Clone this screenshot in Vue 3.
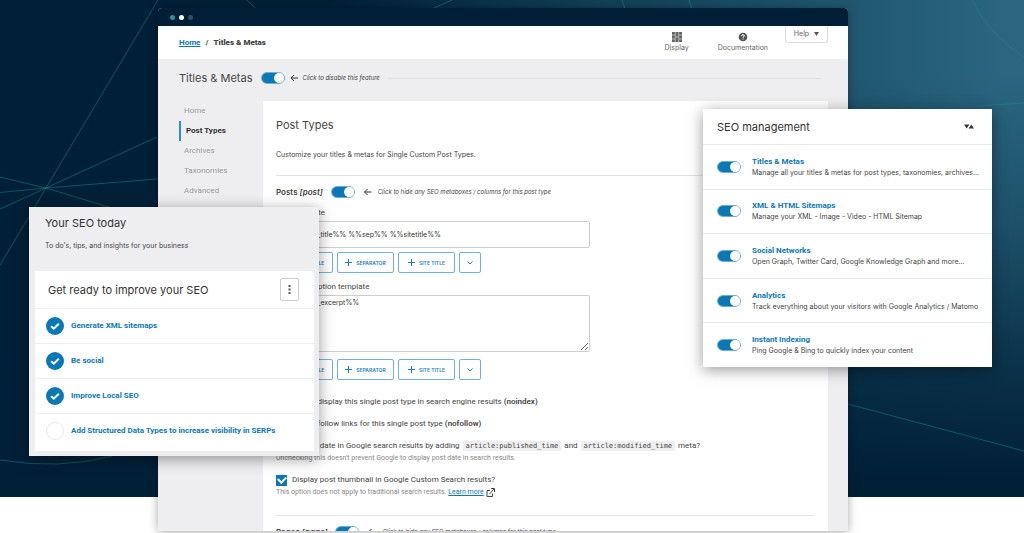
<script setup>
import { ref } from 'vue'

const nav = ['Home', 'Post Types', 'Archives', 'Taxonomies', 'Advanced']
const current = 'Post Types'

const pageEnabled = ref(true)
const postsEnabled = ref(true)
const pagesEnabled = ref(true)
const titleTemplate = ref('%%post_title%% %%sep%% %%sitetitle%%')
const descTemplate = ref('%%post_excerpt%%')
const noindex = ref(false)
const nofollow = ref(false)
const showDate = ref(true)
const showThumb = ref(true)

const tags = ['Post title', 'Separator', 'Site title']

const tasks = ref([
  { label: 'Generate XML sitemaps', done: true },
  { label: 'Be social', done: true },
  { label: 'Improve Local SEO', done: true },
  { label: 'Add Structured Data Types to increase visibility in SERPs', done: false },
])

const features = ref([
  { name: 'Titles & Metas', text: 'Manage all your titles & metas for post types, taxonomies, archives...', on: true },
  { name: 'XML & HTML Sitemaps', text: 'Manage your XML - Image - Video - HTML Sitemap', on: true },
  { name: 'Social Networks', text: 'Open Graph, Twitter Card, Google Knowledge Graph and more...', on: true },
  { name: 'Analytics', text: 'Track everything about your visitors with Google Analytics / Matomo', on: true },
  { name: 'Instant Indexing', text: 'Ping Google & Bing to quickly index your content', on: true },
])
</script>

<template>
  <div class="stage">
    <div class="backdrop">
      <svg viewBox="0 0 1024 497" preserveAspectRatio="xMidYMid slice" aria-hidden="true">
        <g fill="none" stroke="#1c8a88" stroke-opacity=".5">
          <path d="M158 0 46 188 0 265M157 137 46 188 0 209M157 179 46 188 0 192.500M0 177 46 188 112 208" />
          <path d="M0 460Q60 470 112 456" />
          <path d="M247 0l8 8M434 8l18-8M622 0l3 9M689 0l3 9" />
          <path d="M972 0Q988 34 1024 57M976 106l48-3M848 404l176 47" />
        </g>
      </svg>
    </div>

    <main class="window">
      <div class="titlebar"><i class="dot teal"></i><i class="dot white"></i><i class="dot dim"></i></div>

      <header class="topbar">
        <nav class="crumbs" aria-label="Breadcrumb">
          <a href="#">Home</a><span>/</span><b>Titles &amp; Metas</b>
        </nav>
        <div class="tools">
          <button class="tool display" type="button">
            <svg width="10" height="10" viewBox="0 0 10 10"><path d="M0 0h10v10H0z" fill="#666" /><path d="M3.300 0v10M6.700 0v10M0 3h3M0 7h3M3.500 5h3M7 3h3M7 7h3" stroke="#fff" stroke-width=".5" /></svg>
            Display
          </button>
          <button class="tool docs" type="button">
            <svg width="10" height="10" viewBox="0 0 10 10"><circle cx="5" cy="5" r="4.300" fill="#555" /><path d="M3.600 4Q3.700 2.700 5 2.700T6.400 3.900Q6.400 4.500 5 5.200V5.800M5 6.600V7.600" fill="none" stroke="#fff" /></svg>
            Documentation
          </button>
          <button class="help" type="button">Help <svg width="5" height="4" viewBox="0 0 5 4"><path d="M0 0h5L2.500 4z" fill="#555" /></svg></button>
        </div>
      </header>

      <div class="heading">
        <h1>Titles &amp; Metas</h1>
        <input id="page-on" v-model="pageEnabled" class="switch" type="checkbox" role="switch" />
        <svg class="arrow" width="8" height="8" viewBox="0 0 8 8"><path d="M8 4H1M4 1 1 4l3 3" /></svg>
        <label class="hint" for="page-on">Click to disable this feature</label>
        <hr />
      </div>

      <div class="body">
        <nav class="side" aria-label="Sections">
          <a v-for="n in nav" :key="n" href="#" :class="{ active: n === current }">{{ n }}</a>
        </nav>

        <section class="panel">
          <h2>Post Types</h2>
          <p class="intro">Customize your titles &amp; metas for Single Custom Post Types.</p>

          <div class="group">
            <h3>Posts <em>[post]</em></h3>
            <input id="posts-on" v-model="postsEnabled" class="switch" type="checkbox" role="switch" />
            <svg class="arrow" width="9" height="8" viewBox="0 0 8 8"><path d="M8 4H1M4 1 1 4l3 3" /></svg>
            <label class="hint" for="posts-on">Click to hide any SEO metaboxes / columns for this post type</label>
          </div>

          <label class="field" for="tpl-title">Title template</label>
          <input id="tpl-title" v-model="titleTemplate" class="box" type="text" />
          <div class="tags">
            <button v-for="t in tags" :key="t" type="button"><svg width="7" height="7" viewBox="0 0 7 7"><path d="M3.500 0v7M0 3.500h7" /></svg>{{ t }}</button>
            <button class="more" type="button" aria-label="More tags"><svg width="6" height="4" viewBox="0 0 6 4"><path d="M.5.5 3 3 5.500.5" /></svg></button>
          </div>

          <label class="field second" for="tpl-desc">Meta description template</label>
          <textarea id="tpl-desc" v-model="descTemplate" class="box area" spellcheck="false"></textarea>
          <div class="tags last">
            <button v-for="t in tags" :key="t" type="button"><svg width="7" height="7" viewBox="0 0 7 7"><path d="M3.500 0v7M0 3.500h7" /></svg>{{ t }}</button>
            <button class="more" type="button" aria-label="More tags"><svg width="6" height="4" viewBox="0 0 6 4"><path d="M.5.5 3 3 5.500.5" /></svg></button>
          </div>

          <label class="check"><input v-model="noindex" type="checkbox" /><span>Do not display this single post type in search engine results <b>(noindex)</b></span></label>
          <label class="check"><input v-model="nofollow" type="checkbox" /><span>Do not follow links for this single post type <b>(nofollow)</b></span></label>
          <label class="check tight"><input v-model="showDate" type="checkbox" /><span>Display date in Google search results by adding <code>article:published_time</code> and <code>article:modified_time</code> meta?</span></label>
          <p class="note">Unchecking this doesn't prevent Google to display post date in search results.</p>
          <label class="check tight"><input v-model="showThumb" type="checkbox" /><span>Display post thumbnail in Google Custom Search results?</span></label>
          <p class="note">
            <span>This option does not apply to traditional search results. <a href="#">Learn more</a></span>
            <svg width="9" height="9" viewBox="0 0 9 9"><path d="M4 2.500H1v6h5.500V5.500M3.500 6 8 1M5 .5h3.500V4" fill="none" stroke="#444" /></svg>
          </p>

          <div class="group pages">
            <h3>Pages <em>[page]</em></h3>
            <input id="pages-on" v-model="pagesEnabled" class="switch" type="checkbox" role="switch" />
            <svg class="arrow" width="9" height="8" viewBox="0 0 8 8"><path d="M8 4H1M4 1 1 4l3 3" /></svg>
            <label class="hint" for="pages-on">Click to hide any SEO metaboxes / columns for this post type</label>
          </div>
        </section>
      </div>
    </main>

    <aside class="card today">
      <h2>Your SEO today</h2>
      <p>To do's, tips, and insights for your business</p>
      <div class="tasks">
        <header>
          <h3>Get ready to improve your SEO</h3>
          <button type="button" aria-label="Options"><svg width="3" height="11" viewBox="0 0 3 11"><path d="M.5 1h2v2h-2zM.5 4.500h2v2h-2zM.5 8h2v2h-2z" fill="#555" /></svg></button>
        </header>
        <ul>
          <li v-for="t in tasks" :key="t.label">
            <svg v-if="t.done" width="18" height="18" viewBox="0 0 18 18"><circle cx="9" cy="9" r="9" fill="#0a78b5" /><path d="m5.200 9.200 2.600 2.500 5-5" fill="none" stroke="#fff" stroke-width="2" /></svg>
            <svg v-else width="18" height="18" viewBox="0 0 18 18"><circle cx="9" cy="9" r="8.500" fill="#fff" stroke="#e8e8ea" /></svg>
            <a href="#">{{ t.label }}</a>
          </li>
        </ul>
      </div>
    </aside>

    <aside class="card manage">
      <header>
        <h2>SEO management</h2>
        <button type="button" aria-label="Reorder"><svg width="10" height="5" viewBox="0 0 10 5"><path d="M0 .5h5.400L2.700 4.500zM4.600 4.500H10L7.300.5z" fill="#333" /></svg></button>
      </header>
      <ul>
        <li v-for="f in features" :key="f.name">
          <input v-model="f.on" class="switch" type="checkbox" role="switch" :aria-label="f.name" />
          <div><a href="#">{{ f.name }}</a><p>{{ f.text }}</p></div>
        </li>
      </ul>
    </aside>
  </div>
</template>

<style>
body { margin: 0; background: #fff; }
</style>

<style scoped>
.stage, .stage * { box-sizing: border-box; }
.stage {
  position: relative;
  display: flex;
  height: 100vh;
  padding: 8px 176px 2px 158px;
  overflow: hidden;
  font: 7px/10px Inter, "Liberation Sans", sans-serif;
  color: #444;
}
h1, h2, h3, p, ul { margin: 0; padding: 0; font-weight: 400; }
ul { list-style: none; }
button { font: inherit; color: inherit; background: none; border: 0; padding: 0; cursor: pointer; }
svg { display: block; flex: none; }
.backdrop {
  position: absolute;
  inset: 0 0 36px;
  background:
    linear-gradient(to bottom, rgba(0, 32, 56, 0) 15%, rgba(0, 32, 56, .3) 45%, rgba(0, 32, 56, .75) 74%, #002038 96%),
    linear-gradient(to right, #002037 32%, #124159 60%, #2a667f 98%);
}
.backdrop svg { width: 100%; height: 100%; }

.window {
  position: relative;
  flex: 1;
  min-width: 0;
  display: flex;
  flex-direction: column;
  overflow: hidden;
  background: #eeeef1;
  border-radius: 4px 4px 0 0;
  box-shadow: 0 1px 10px rgba(0, 0, 0, .35);
}
.titlebar { display: flex; align-items: center; gap: 4px; flex: none; height: 18px; padding: 0 12px; background: #001f37; }
.dot { width: 5px; height: 5px; border-radius: 50%; }
.teal { background: #239a92; }
.white { background: #fff; }
.dim { background: #344c61; }

.crumbs, .side, .field, .check, .note, .card a { font-family: Roboto, "Liberation Sans", sans-serif; font-size: 8px; }

.topbar { display: flex; justify-content: space-between; flex: none; height: 33px; padding: 0 20px 0 21px; background: #fff; }
.crumbs { display: flex; align-items: center; gap: 5px; font-weight: 700; }
a { color: #0a78b5; }
.tools { display: flex; align-items: flex-start; color: #666; }
.tool { display: flex; flex-direction: column; align-items: center; padding-top: 6px; }
.tool svg { margin-bottom: 1px; }
.tool.display { margin-right: 29px; }
.tool.docs { margin-right: 17px; }
.help { display: flex; align-items: center; justify-content: center; gap: 5px; width: 43px; height: 17px; border: 1px solid #dcdcde; border-top: 0; border-radius: 0 0 3px 3px; }

.heading { display: flex; align-items: center; flex: none; height: 42px; padding: 0 27px 4px 21px; }
h1 { font-size: 11px; line-height: 14px; margin-right: 8px; }
.switch {
  appearance: none;
  flex: none;
  width: 24px;
  height: 12px;
  margin: 0;
  border: 1px solid #6caed3;
  border-radius: 6px;
  background: #fff;
}
.switch:checked { background: linear-gradient(to right, #0a78b5 70%, #fff 70%); }
.switch::before { content: ""; display: block; width: 10px; height: 10px; border-radius: 50%; background: #0a78b5; }
.switch:checked::before { margin-left: 12px; background: #fff; }
.arrow { margin: 0 5px; fill: none; stroke: #333; }
.hint { font-size: 6px; font-style: italic; line-height: 10px; }
hr { flex: 1; height: 1px; margin: 0 0 0 8px; border: 0; background: #dfdfe3; }

.body { display: flex; flex: 1; min-height: 0; padding: 0 20px 0 21px; }
.side { flex: none; width: 84px; }
.side a { display: block; height: 20px; padding-left: 5px; line-height: 20px; color: #999; text-decoration: none; }
.side a.active { border-left: 2px solid #2591c8; color: #333; font-weight: 700; }

.panel { flex: 1; min-width: 0; padding: 17px 14px 0 13px; background: #fff; }
.panel h2 { font-size: 11px; line-height: 14px; }
.intro { padding: 18px 0 15px; border-bottom: 1px solid #e4e4e6; }
.group { display: flex; align-items: center; height: 32px; }
.group h3 { margin-right: 8px; font-size: 8px; line-height: 10px; font-weight: 600; }
.group .arrow { margin: 0 6px 0 8px; }
.field { display: block; margin: 0 0 3px; }
.second { margin-top: 9px; }
.box {
  display: block;
  width: calc(100% - 224px);
  height: 27px;
  margin: 0;
  padding: 0 12px;
  border: 1px solid #ccc;
  border-radius: 2px;
  background: #fff;
  font: inherit;
  color: #333;
}
.area { height: 57px; padding-top: 2px; resize: vertical; }
.tags { display: flex; gap: 4px; margin-top: 4px; }
.tags button { display: flex; align-items: center; justify-content: center; gap: 4px; width: 57px; height: 21px; border: 1px solid #6db3d9; border-radius: 2px; color: #1b80b8; font-size: 5px; font-weight: 600; text-transform: uppercase; }
.tags .more { width: 22px; }
.tags svg { fill: none; stroke: #1b80b8; }
.tags.last { margin: 7px 0 17px; }
.check { display: flex; align-items: center; gap: 5px; height: 10px; margin-bottom: 12px; }
.check b { font-weight: 600; }
.check input { display: grid; place-items: center; appearance: none; flex: none; width: 11px; height: 11px; margin: 0; border: 1px solid #8c8f94; }
.check input:checked { border-color: #0a78b5; background: #0a78b5; }
.check input:checked::before { content: ""; width: 6px; height: 4px; margin-bottom: 2px; border: solid #fff; border-width: 0 0 2px 2px; transform: rotate(-45deg); }
.tight { margin-bottom: 2px; }
code { margin: 0 1px; padding: 1px 3px; background: #efeff1; font: 7px/10px "DejaVu Sans Mono", monospace; }
.check + .note { font-size: 7px; }
.note { display: flex; align-items: center; gap: 2px; margin-bottom: 12px; color: #888; }
.pages { margin-top: 18px; border-top: 1px solid #e4e4e6; }

.card { position: absolute; box-shadow: 0 3px 14px rgba(0, 0, 0, .4); }
.card h2, .card h3 { font-size: 11px; line-height: 14px; color: #333; }
.card a { font-weight: 700; text-decoration: none; }
.today { left: 29px; top: 207px; width: 290px; padding: 9px 5px 5px 6px; background: #eeeef1; }
.today > h2, .today > p { padding-left: 10px; }
.today > p { margin: 11px 0 20px; }
.tasks { padding-bottom: 3px; background: #fff; }
.tasks header { display: flex; align-items: center; justify-content: space-between; height: 37px; padding: 0 15px 0 13px; }
.tasks button { display: flex; align-items: center; justify-content: center; width: 19px; height: 23px; border: 1px solid #ccc; border-radius: 2px; }
.tasks li { display: flex; align-items: center; gap: 7px; min-height: 35px; padding-left: 11px; border-top: 1px solid #f0f0f2; }
.manage { right: 32px; top: 109px; width: 289px; background: #fff; }
.manage header { display: flex; align-items: center; justify-content: space-between; height: 35px; padding: 0 18px 0 14px; }
.manage ul { display: grid; grid-auto-rows: 1fr; height: 223px; }
.manage li { display: flex; align-items: center; gap: 11px; padding-left: 14px; border-top: 1px solid #e9e9ec; }
.manage li div { line-height: 11px; }
</style>
